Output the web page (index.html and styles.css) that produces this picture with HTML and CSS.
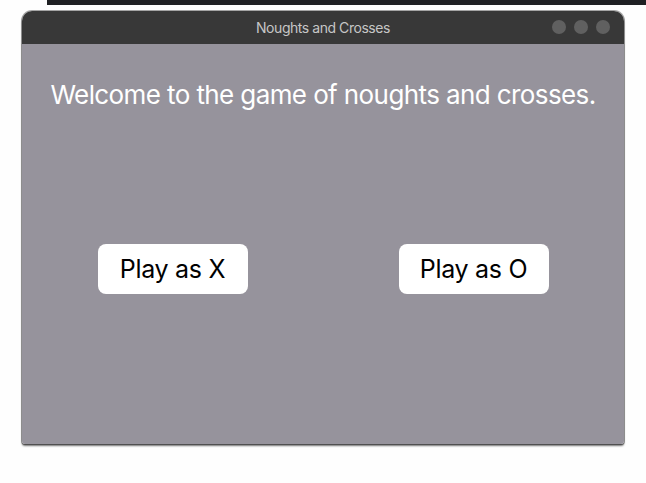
FILE: index.html
```html
<!DOCTYPE html>
<html lang="en">
<head>
<meta charset="utf-8">
<title>Noughts and Crosses</title>
<link rel="stylesheet" href="styles.css">
</head>
<body>
<div class="editor-strip"></div>
<div class="window">
  <div class="titlebar">
    <span class="title">Noughts and Crosses</span>
    <div class="lights">
      <span class="light"></span>
      <span class="light"></span>
      <span class="light"></span>
    </div>
  </div>
  <div class="content">
    <h1 class="welcome">Welcome to the game of noughts and crosses.</h1>
    <div class="choices">
      <button class="play">Play as X</button>
      <button class="play">Play as O</button>
    </div>
  </div>
</div>
</body>
</html>
```

FILE: styles.css
```css
html, body {
  margin: 0;
  padding: 0;
  background: #fefefe;
}
body {
  width: 646px;
  height: 483px;
  overflow: hidden;
  font-family: Inter, "Noto Sans", sans-serif;
}
.editor-strip {
  height: 5px;
  margin-left: 47px;
  background: #1f2023;
}
.window {
  margin: 6px 0 0 22px;
  width: 602px;
  height: 433px;
  border-radius: 10px 10px 3px 3px;
  overflow: hidden;
  display: flex;
  flex-direction: column;
  box-shadow: 0 0 0 1px rgba(0,0,0,0.35), 0 2px 2px rgba(0,0,0,0.55);
}
.titlebar {
  position: relative;
  height: 33px;
  flex: none;
  background: #383838;
  display: flex;
  align-items: center;
  justify-content: center;
}
.title {
  font-size: 14px;
  color: #c6c6c6;
  letter-spacing: -0.45px;
}
.lights {
  position: absolute;
  right: 14px;
  top: 9px;
  display: flex;
  gap: 8px;
}
.light {
  width: 14px;
  height: 14px;
  border-radius: 50%;
  background: #606060;
}
.content {
  flex: 1;
  background: #96939c;
  display: flex;
  flex-direction: column;
}
.welcome {
  margin: 35px 0 0;
  text-align: center;
  font-size: 26px;
  font-weight: 400;
  color: #ffffff;
  letter-spacing: -0.6px;
}
.choices {
  margin-top: 134px;
  display: flex;
  justify-content: space-around;
}
.play {
  width: 150px;
  height: 50px;
  border: none;
  border-radius: 8px;
  background: #ffffff;
  color: #000000;
  font-family: Inter, "Noto Sans", sans-serif;
  font-size: 25px;
  padding: 0;
  letter-spacing: -0.3px;
}
```
